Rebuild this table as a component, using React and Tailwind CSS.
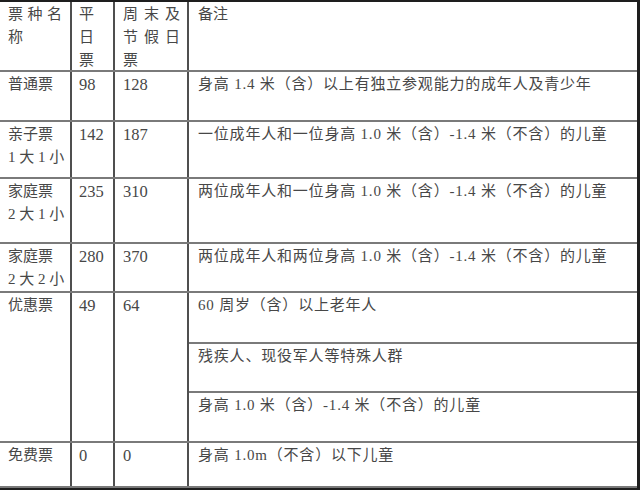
import React from 'react';

const rows = [
  { name: ['普通票'], weekday: '98', weekend: '128', h: 'h-[50px]', note: '身高 1.4 米（含）以上有独立参观能力的成年人及青少年' },
  { name: ['亲子票', '1 大 1 小'], weekday: '142', weekend: '187', h: 'h-[57px]', note: '一位成年人和一位身高 1.0 米（含）-1.4 米（不含）的儿童' },
  { name: ['家庭票', '2 大 1 小'], weekday: '235', weekend: '310', h: 'h-[65px]', note: '两位成年人和一位身高 1.0 米（含）-1.4 米（不含）的儿童' },
  { name: ['家庭票', '2 大 2 小'], weekday: '280', weekend: '370', h: 'h-[49px]', note: '两位成年人和两位身高 1.0 米（含）-1.4 米（不含）的儿童' },
];

const subNotes = [
  { text: '60 周岁（含）以上老年人', h: 'h-[51px] border-b-2' },
  { text: '残疾人、现役军人等特殊人群', h: 'h-[49px] border-b-2' },
  { text: '身高 1.0 米（含）-1.4 米（不含）的儿童', h: 'flex-1' },
];

const Cols = ({ c1, c2, c3, c4, className = '' }) => (
  <div className={`flex border-b-2 border-[#7a7a7a] ${className}`}>
    <div className="w-[70px] shrink-0 pl-[8px] pt-[1px]">{c1}</div>
    <div className="w-[43px] shrink-0 border-l-2 border-[#4f4f4f] pl-[7px] pt-[1px]">{c2}</div>
    <div className="w-[74px] shrink-0 border-l-2 border-[#4f4f4f] pl-[8px] pt-[1px]">{c3}</div>
    <div className="flex-1 border-l-2 border-[#4f4f4f]">{c4}</div>
  </div>
);

const Lines = ({ items, className = '' }) => (
  <>
    {items.map((t, i) => (
      <div key={i} className={`whitespace-nowrap ${className}`}>{t}</div>
    ))}
  </>
);

const Num = ({ children }) => <span className="text-[16.5px]">{children}</span>;

const Note = ({ children, className = '' }) => (
  <div className={`pl-[9px] pt-[1px] tracking-[0.8px] whitespace-nowrap ${className}`}>{children}</div>
);

export default function App() {
  return (
    <div className="w-[640px] h-[490px] bg-white border-t-2 border-r-[3px] border-b-2 border-[#1e1e1e] overflow-hidden flex flex-col text-[15px] leading-[23px] text-[#474747] font-['Liberation_Serif','Noto_Sans_CJK_SC',serif]">
      {/* header */}
      <Cols
        className="h-[70px]"
        c1={<Lines items={['票种名', '称']} className="tracking-[4.5px]" />}
        c2={<Lines items={['平', '日', '票']} />}
        c3={<Lines items={['周末及', '节假日', '票']} className="tracking-[6px]" />}
        c4={<Note className="tracking-normal">备注</Note>}
      />

      {rows.map((r, i) => (
        <Cols
          key={i}
          className={r.h}
          c1={<Lines items={r.name} />}
          c2={<Num>{r.weekday}</Num>}
          c3={<Num>{r.weekend}</Num>}
          c4={<Note>{r.note}</Note>}
        />
      ))}

      {/* 优惠票 with three note rows */}
      <Cols
        className="h-[150px]"
        c1="优惠票"
        c2={<Num>49</Num>}
        c3={<Num>64</Num>}
        c4={
          <div className="flex flex-col h-full">
            {subNotes.map((s, i) => (
              <Note key={i} className={`${s.h} border-[#7a7a7a]`}>
                {s.text}
              </Note>
            ))}
          </div>
        }
      />

      <Cols
        className="flex-1 border-b-0"
        c1="免费票"
        c2={<Num>0</Num>}
        c3={<Num>0</Num>}
        c4={<Note>身高 1.0m（不含）以下儿童</Note>}
      />
    </div>
  );
}
